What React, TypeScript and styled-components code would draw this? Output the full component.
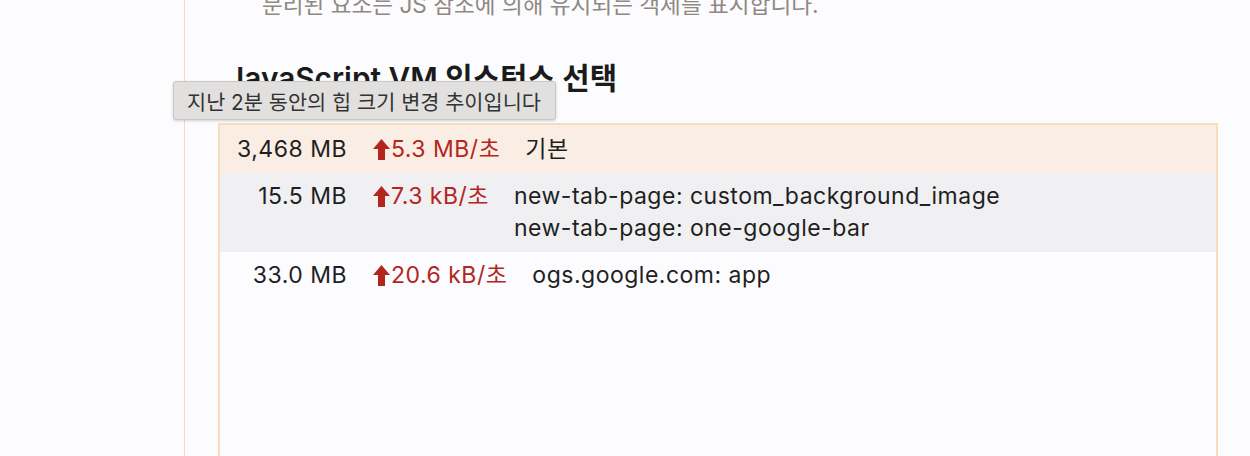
import React from "react";
import styled, { createGlobalStyle } from "styled-components";

const GlobalStyle = createGlobalStyle`
  html, body {
    margin: 0;
    padding: 0;
    background: #fcfbfe;
    overflow: hidden;
  }
  body {
    font-family: Inter, "Noto Sans CJK KR", "Noto Sans", sans-serif;
    color: #1f1f1f;
  }
`;

const Page = styled.div`
  position: relative;
  width: 1250px;
  height: 456px;
  overflow: hidden;
  padding-left: 184px;
  box-sizing: border-box;
`;

const Content = styled.main`
  border-left: 1.5px solid #f8dbbb;
  padding-left: 33px;
  height: 100%;
  box-sizing: border-box;
  display: flex;
  flex-direction: column;
`;

const Description = styled.p`
  margin: -12px 0 0 44px;
  font-size: 22.6px;
  line-height: 34px;
  color: #8e8983;
  white-space: nowrap;
`;

const Heading = styled.h2`
  margin: 37px 0 26px 9px;
  font-size: 29.8px;
  line-height: 38px;
  font-weight: 600;
  color: #1b1b1b;
  white-space: nowrap;
`;

const Table = styled.div`
  width: 1000px;
  flex: 1;
  box-sizing: border-box;
  border: 2px solid #f9dcbc;
  border-bottom: none;
  display: flex;
  flex-direction: column;
`;

const Row = styled.div<{ $variant: "selected" | "alt" | "plain" }>`
  display: flex;
  align-items: flex-start;
  padding: 8.5px 0 7.5px;
  font-size: 23px;
  letter-spacing: 0.5px;
  line-height: 31.5px;
  background: ${(p) =>
    p.$variant === "selected" ? "#faede4" : p.$variant === "alt" ? "#f0eff2" : "transparent"};
`;

const Size = styled.div`
  width: 127px;
  flex: none;
  text-align: right;
  white-space: nowrap;
`;

const Rate = styled.div`
  margin-left: 26px;
  display: flex;
  align-items: center;
  color: #b3261e;
  white-space: nowrap;
  letter-spacing: 0.5px;
`;

const Names = styled.div`
  margin-left: 25px;
  display: flex;
  flex-direction: column;
  white-space: nowrap;
`;

const ArrowIcon = styled.svg`
  width: 17px;
  height: 21px;
  flex: none;
  margin-right: 1px;
`;

const Tooltip = styled.div`
  position: absolute;
  left: 173px;
  top: 81px;
  height: 39px;
  box-sizing: border-box;
  padding: 0 14px 0 13px;
  display: flex;
  align-items: center;
  background: #e1e0de;
  border: 1px solid #c9c8c6;
  border-radius: 3px;
  box-shadow: 0 1px 3px rgba(0, 0, 0, 0.18);
  font-size: 20.8px;
  color: #333333;
  white-space: nowrap;
`;

const Arrow = () => (
  <ArrowIcon viewBox="0 0 17 21" aria-hidden>
    <path d="M8.5 0 L17 10 H12 V21 H5 V10 H0 Z" fill="#b3261e" />
  </ArrowIcon>
);

const rows = [
  { size: "3,468 MB", rate: "5.3 MB/초", names: ["기본"], variant: "selected" as const },
  {
    size: "15.5 MB",
    rate: "7.3 kB/초",
    names: ["new-tab-page: custom_background_image", "new-tab-page: one-google-bar"],
    variant: "alt" as const,
  },
  { size: "33.0 MB", rate: "20.6 kB/초", names: ["ogs.google.com: app"], variant: "plain" as const },
];

export default function App() {
  return (
    <>
      <GlobalStyle />
      <Page>
        <Content>
          <Description>분리된 요소는 JS 참조에 의해 유지되는 객체를 표시합니다.</Description>
          <Heading>JavaScript VM 인스턴스 선택</Heading>
          <Table>
            {rows.map((r) => (
              <Row key={r.size} $variant={r.variant}>
                <Size>{r.size}</Size>
                <Rate>
                  <Arrow />
                  {r.rate}
                </Rate>
                <Names>
                  {r.names.map((n) => (
                    <span key={n}>{n}</span>
                  ))}
                </Names>
              </Row>
            ))}
          </Table>
        </Content>
        <Tooltip>지난 2분 동안의 힙 크기 변경 추이입니다</Tooltip>
      </Page>
    </>
  );
}
